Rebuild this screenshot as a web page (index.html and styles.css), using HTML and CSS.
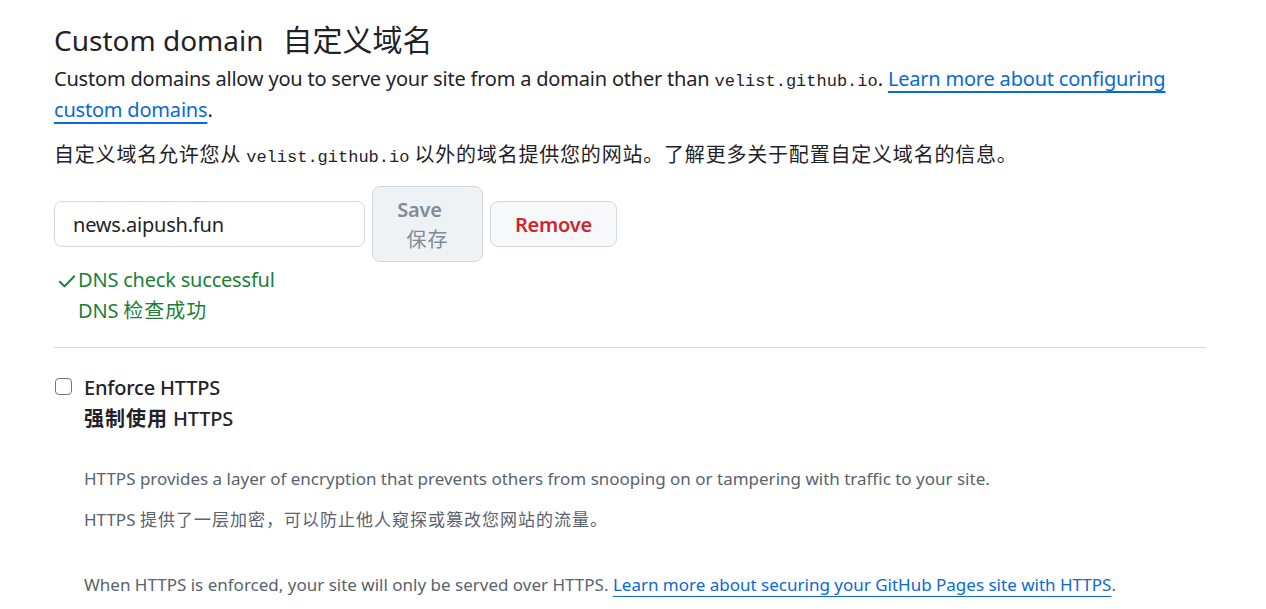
FILE: index.html
```html
<!DOCTYPE html>
<html lang="en">
<head>
<meta charset="utf-8">
<title>Custom domain</title>
<link rel="stylesheet" href="styles.css">
</head>
<body>
<main class="page">
  <h2 class="title">Custom domain<span class="title-zh">自定义域名</span></h2>
  <p class="lead">Custom domains allow you to serve your site from a domain other than <code class="mono">velist.github.io</code>. <a class="link link-thick" href="#">Learn more about configuring custom domains</a>.</p>
  <p class="lead-zh"><span class="zh">自定义域名允许您从</span> <code class="mono">velist.github.io</code> <span class="zh">以外的域名提供您的网站。了解更多关于配置自定义域名的信息。</span></p>

  <form class="domain-form">
    <input class="domain-input" type="text" value="news.aipush.fun">
    <button class="btn btn-save" type="button" disabled><span class="btn-en">Save</span><span class="btn-zh">保存</span></button>
    <button class="btn btn-remove" type="button">Remove</button>
  </form>

  <div class="dns-ok">
    <svg class="check" viewBox="0 0 16 16" width="20" height="20" aria-hidden="true"><path d="M2.3 8.6 L6 12.3 L13.8 4.2" fill="none" stroke="currentColor" stroke-width="1.6" stroke-linecap="round" stroke-linejoin="round"/></svg>
    <div class="dns-text">
      <div>DNS check successful</div>
      <div>DNS <span class="zh">检查成功</span></div>
    </div>
  </div>

  <hr class="divider">

  <div class="https-row">
    <span class="checkbox"></span>
    <div class="https-body">
      <div class="https-label">Enforce HTTPS</div>
      <div class="https-label"><span class="zh zh-bold">强制使用</span> HTTPS</div>
      <p class="note note-first">HTTPS provides a layer of encryption that prevents others from snooping on or tampering with traffic to your site.</p>
      <p class="note">HTTPS <span class="zh">提供了一层加密，可以防止他人窥探或篡改您网站的流量。</span></p>
      <p class="note note-last">When HTTPS is enforced, your site will only be served over HTTPS. <a class="link" href="#">Learn more about securing your GitHub Pages site with HTTPS</a>.</p>
    </div>
  </div>
</main>
</body>
</html>
```

FILE: styles.css
```css
html, body {
  margin: 0;
  padding: 0;
  background: #ffffff;
}
body {
  font-family: "Segoe UI", "Noto Sans", "Noto Sans CJK SC", sans-serif;
  color: #1f2328;
  font-size: 20px;
  letter-spacing: -0.2px;
}
.page {
  width: 1152px;
  padding: 19px 0 0 54px;
}
.title {
  margin: 0;
  font-size: 28px;
  font-weight: 400;
  line-height: 38px;
  letter-spacing: 0;
}
.title-zh {
  margin-left: 19px;
  font-family: "Noto Sans CJK SC", sans-serif;
  font-size: 30px;
}
.zh {
  font-family: "Noto Sans CJK SC", sans-serif;
  letter-spacing: 1px;
}
.lead {
  margin: 4px 0 0;
  line-height: 31px;
}
.lead-zh {
  margin: 14px 0 0;
  line-height: 30px;
}
.lead-zh .zh {
  letter-spacing: 0.8px;
}
.mono {
  font-family: "Liberation Mono", "DejaVu Sans Mono", monospace;
  font-size: 17px;
  line-height: 1;
  letter-spacing: 0;
}
.link {
  color: #0969da;
  text-decoration: underline;
  text-underline-offset: 5px;
  text-decoration-thickness: 1px;
}
.link-thick {
  text-decoration-thickness: 2px;
}
.domain-form {
  display: flex;
  align-items: center;
  gap: 7px;
  margin-top: 16px;
}
.domain-input {
  box-sizing: border-box;
  width: 311px;
  height: 46px;
  padding: 0 18px;
  border: 1px solid #d1d9e0;
  border-radius: 8px;
  font: inherit;
  font-size: 20px;
  letter-spacing: -0.2px;
  color: #1f2328;
  background: #fff;
}
.btn {
  box-sizing: border-box;
  border: 1px solid #d1d9e0;
  border-radius: 8px;
  font-family: inherit;
  font-size: 20px;
  font-weight: 600;
  letter-spacing: -0.2px;
}
.btn-save {
  width: 111px;
  height: 76px;
  display: flex;
  flex-direction: column;
  align-items: center;
  justify-content: center;
  background: #eff2f5;
  color: #818b98;
  line-height: 29px;
  padding: 0;
}
.btn-en {
  margin-right: 16px;
}
.btn-zh {
  font-weight: 400;
  font-family: "Noto Sans CJK SC", sans-serif;
  letter-spacing: 1px;
}
.btn-remove {
  width: 127px;
  height: 46px;
  background: #f6f8fa;
  color: #d1242f;
}
.dns-ok {
  display: flex;
  align-items: flex-start;
  color: #1a7f37;
  margin-top: 3px;
}
.check {
  margin: 6px 1px 0 3px;
  flex: none;
}
.dns-text {
  line-height: 30px;
}
.divider {
  border: 0;
  border-top: 1px solid #d1d9e0;
  margin: 21px 0 0;
}
.https-row {
  display: flex;
  align-items: flex-start;
  margin-top: 24px;
}
.checkbox {
  box-sizing: border-box;
  width: 17px;
  height: 17px;
  border: 1.5px solid #6e7781;
  border-radius: 4px;
  margin: 6px 12px 0 1px;
  flex: none;
}
.https-body {
  flex: 1;
}
.https-label {
  font-weight: 500;
  line-height: 31px;
}
.https-label .zh {
  line-height: 1;
}
.zh-bold {
  font-weight: 700;
}
.note {
  margin: 0;
  font-size: 17px;
  line-height: 40px;
  color: #59636e;
  letter-spacing: 0;
}
.note-first {
  margin-top: 25px;
}
.note-last {
  margin-top: 25px;
}
```
